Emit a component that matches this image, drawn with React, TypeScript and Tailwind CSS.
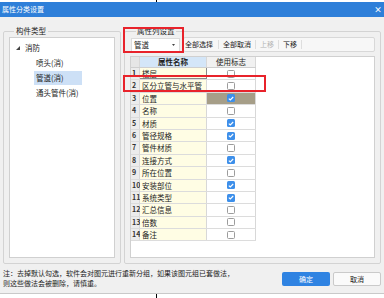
import React from "react";

// 属性列设置表格的数据
const rows = [
  { name: "楼层", on: false },
  { name: "区分立管与水平管", on: false },
  { name: "位置", on: true },
  { name: "名称", on: false },
  { name: "材质", on: true },
  { name: "管径规格", on: true },
  { name: "管件材质", on: false },
  { name: "连接方式", on: true },
  { name: "所在位置", on: false },
  { name: "安装部位", on: true },
  { name: "系统类型", on: true },
  { name: "汇总信息", on: false },
  { name: "倍数", on: false },
  { name: "备注", on: false },
];

function Check({ on }: { on: boolean }) {
  if (on) {
    return (
      <span className="flex h-[8px] w-[8px] items-center justify-center rounded-[1.5px] bg-[#3d8fea]">
        <svg width="6" height="5" viewBox="0 0 6 5">
          <path d="M0.8 2.6 L2.3 4 L5.2 1" stroke="white" strokeWidth="1.1" fill="none" />
        </svg>
      </span>
    );
  }
  return <span className="h-[8px] w-[8px] rounded-[1.5px] border border-[#9c9c9c] bg-white" />;
}

export default function App() {
  return (
    <div className="relative h-[298px] w-[384px] overflow-hidden bg-white font-['Noto_Sans_CJK_SC',sans-serif] text-[#222]">
      {/* 顶部残留线 */}
      <div className="h-[2px]">
        <div className="ml-[156px] h-[2px] w-px bg-black" />
      </div>

      {/* 标题栏 */}
      <div className="flex h-[15px] items-center justify-between bg-[#2e7fd9] pl-[2px] pr-[2px] text-white">
        <span className="text-[7px] leading-[15px]">属性分类设置</span>
        <span className="text-[8px] font-bold leading-[15px]">×</span>
      </div>

      {/* 对话框主体 */}
      <div className="h-[277px] border-b border-[#c9c9c9] bg-[#f0f0f0]">
        <div className="flex h-[247px] gap-[3px] pl-[3px] pt-[8px]">
          {/* 构件类型 */}
          <fieldset className="flex h-[239px] w-[118px] flex-col rounded-[2px] border border-[#d3d3d3] px-[5px] pb-[5px]">
            <legend className="ml-[5px] px-[2px] text-[7.5px] leading-[12px]">构件类型</legend>
            <div className="flex-1 border border-[#d0d0d0] bg-white pt-[2px] text-[7.5px]">
              <div className="flex h-[15px] items-center pl-[6px]">
                <svg width="4" height="4" viewBox="0 0 4 4" className="mr-[5px]">
                  <path d="M4 0 L4 4 L0 4 Z" fill="#444" />
                </svg>
                <span>消防</span>
              </div>
              <div className="flex h-[15px] items-center pl-[26px]">喷头(消)</div>
              <div className="flex h-[15px] items-center pl-[24px]">
                <span className="flex h-[14px] w-[48px] items-center bg-[#cde0f6] pl-[2px]">管道(消)</span>
              </div>
              <div className="flex h-[15px] items-center pl-[26px]">通头管件(消)</div>
            </div>
          </fieldset>

          {/* 属性列设置 */}
          <fieldset className="flex h-[239px] w-[257px] flex-col rounded-[2px] border border-[#d3d3d3] px-[5px] pb-[5px]">
            <legend className="ml-[6px] px-[1px] text-[7.5px] leading-[12px]">属性列设置</legend>
            <div className="flex h-[15px] items-center">
              <div className="ml-[1px] flex h-[14px] w-[49px] items-center justify-between border border-[#dcdcdc] bg-white pl-[2px] pr-[4px] text-[7.5px]">
                <span>管道</span>
                <svg width="3" height="2" viewBox="0 0 3 2">
                  <path d="M0 0 L3 0 L1.5 2 Z" fill="#444" />
                </svg>
              </div>
              <div className="ml-[3px] flex h-[15px] flex-1 items-center rounded-[2px] border border-[#d8d8d8] bg-[#f7f7f7] text-[7px]">
                <span className="px-[1px]">全部选择</span>
                <span className="mx-[4px] h-[9px] w-px bg-[#dedede]" />
                <span>全部取消</span>
                <span className="mx-[4px] h-[9px] w-px bg-[#dedede]" />
                <span className="text-[#b5b5b5]">上移</span>
                <span className="mx-[4px] h-[9px] w-px bg-[#dedede]" />
                <span>下移</span>
                <span className="mx-[4px] h-[9px] w-px bg-[#dedede]" />
              </div>
            </div>

            <div className="mt-[4px] flex-1 border border-[#d0d0d0] bg-white">
              <div className="w-[125px] text-[7.5px]">
                <div className="flex h-[11px] border-b border-[#cfcfcf] leading-[10px]">
                  <div className="w-[9px] border-r border-[#d8d8d8] bg-[#e6e6e6]" />
                  <div className="w-[67px] border-r border-[#d8d8d8] bg-[#d4e6f8] text-center font-bold">属性名称</div>
                  <div className="flex-1 border-r border-[#d8d8d8] bg-[#f1f1f1] text-center">使用标志</div>
                </div>
                {rows.map((r, i) => (
                  <div key={r.name} className="flex h-[12.4px] border-b border-[#dcdcdc] leading-[11px]">
                    <div
                      className={
                        i === 0
                          ? "w-[9px] border-r border-[#d8d8d8] bg-[#ececec] pl-[1px] text-[7px] font-bold"
                          : "w-[9px] border-r border-[#d8d8d8] bg-[#ececec] pl-[1px] text-[7px] font-semibold text-[#333]"
                      }
                    >
                      {i + 1}
                    </div>
                    <div
                      className={
                        i === 0
                          ? "w-[67px] border-r border-[#8a8a8a] bg-[#fffde4] pl-[2px] shadow-[inset_0_-1px_0_#8a8a8a]"
                          : "w-[67px] border-r border-[#d8d8d8] bg-[#fffde4] pl-[2px]"
                      }
                    >
                      {r.name}
                    </div>
                    <div
                      className={
                        i === 2
                          ? "flex flex-1 items-center justify-center border-r border-[#d8d8d8] bg-[#a69e88]"
                          : "flex flex-1 items-center justify-center border-r border-[#d8d8d8]"
                      }
                    >
                      <Check on={r.on} />
                    </div>
                  </div>
                ))}
              </div>
            </div>
          </fieldset>
        </div>

        {/* 底部说明和按钮 */}
        <div className="flex items-start pl-[3px] pr-[3px] pt-[4px]">
          <div className="flex-1 text-[7px] leading-[10px]">
            <div>注：去掉默认勾选，软件会对图元进行重新分组，如果该图元组已套做法，</div>
            <div>则这些做法会被删除，请慎重。</div>
          </div>
          <button className="mt-[4px] h-[14px] w-[48px] rounded-[2px] bg-[#2f83e2] text-[7px] text-white">确定</button>
          <button className="ml-[3px] mt-[4px] h-[14px] w-[48px] rounded-[2px] border border-[#cacaca] bg-[#fafafa] text-[7px]">取消</button>
        </div>
      </div>

      <div className="ml-[156px] h-[4px] w-px bg-black" />

      {/* 红色标注框 */}
      <div className="absolute left-[123px] top-[27px] h-[26px] w-[61px] border-2 border-[#e8232b]" />
      <div className="absolute left-[123px] top-[75px] h-[17px] w-[143px] border-2 border-[#e8232b]" />
    </div>
  );
}
